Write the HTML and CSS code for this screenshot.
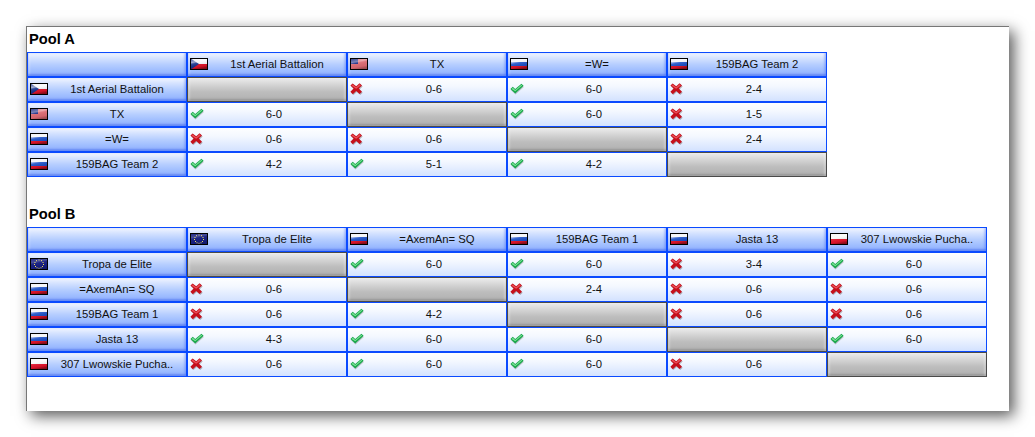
FILE: index.html
```html
<!DOCTYPE html>
<html lang="en">
<head>
<meta charset="utf-8">
<title>Pools</title>
<link rel="stylesheet" href="styles.css">
</head>
<body>
<svg class="defs" width="0" height="0" aria-hidden="true">
  <defs>
    <linearGradient id="gloss" x1="0" y1="0" x2="0.3" y2="1">
      <stop offset="0" stop-color="#fff" stop-opacity=".05"/>
      <stop offset=".38" stop-color="#fff" stop-opacity=".6"/>
      <stop offset=".5" stop-color="#fff" stop-opacity=".12"/>
      <stop offset=".8" stop-color="#000" stop-opacity=".05"/>
      <stop offset="1" stop-color="#000" stop-opacity=".4"/>
    </linearGradient>
    <symbol id="cz" viewBox="0 0 18 12">
      <rect width="18" height="6" fill="#f4f4f8"/><rect y="6" width="18" height="6" fill="#e0142a"/>
      <path d="M0 0 9 6 0 12z" fill="#14308c"/>
      <rect width="18" height="12" fill="url(#gloss)"/>
    </symbol>
    <symbol id="us" viewBox="0 0 18 12">
      <rect width="18" height="12" fill="#f0b8b8"/>
      <path d="M0 1h18M0 3h18M0 5h18M0 7h18M0 9h18M0 11h18" stroke="#c81c2c" stroke-width="1"/>
      <rect width="8" height="6" fill="#1c2c84"/>
      <rect width="18" height="12" fill="url(#gloss)" opacity=".7"/>
    </symbol>
    <symbol id="ru" viewBox="0 0 18 12">
      <rect width="18" height="4" fill="#eef0f6"/><rect y="4" width="18" height="4" fill="#1c50c8"/><rect y="8" width="18" height="4" fill="#e0142a"/>
      <rect width="18" height="12" fill="url(#gloss)"/>
    </symbol>
    <symbol id="pl" viewBox="0 0 18 12">
      <rect width="18" height="6" fill="#f6f6f6"/><rect y="6" width="18" height="6" fill="#e4142c"/>
      <rect width="18" height="12" fill="url(#gloss)"/>
    </symbol>
    <symbol id="eu" viewBox="0 0 18 12">
      <rect width="18" height="12" fill="#161e80"/>
      <g fill="#f6e25a">
        <rect x="8.5" y="1.5" width="1" height="1"/><rect x="11" y="2.2" width="1" height="1"/><rect x="12.5" y="4" width="1" height="1"/><rect x="13" y="6" width="1" height="1"/><rect x="12" y="8" width="1" height="1"/><rect x="10.5" y="9.3" width="1" height="1"/><rect x="8.5" y="9.8" width="1" height="1"/><rect x="6.5" y="9.3" width="1" height="1"/><rect x="5" y="8" width="1" height="1"/><rect x="4" y="6" width="1" height="1"/><rect x="4.5" y="4" width="1" height="1"/><rect x="6" y="2.2" width="1" height="1"/>
      </g>
      <rect width="18" height="12" fill="url(#gloss)" opacity=".35"/>
    </symbol>
    <symbol id="win" viewBox="0 0 14 12">
      <path d="M.6 6.2 3 4 5.2 6.2 11.4.9 13.6 3 5.2 10.6z" fill="#000" opacity=".2" transform="translate(.3 .9)"/>
      <path d="M.4 6 2.8 3.8 5.2 6 11.4.7 13.6 2.8 5.2 10.4z" fill="#18a84a"/>
      <path d="M1.6 5.9 2.8 4.8 5.2 7 11.4 1.7 12.2 2.5 5.2 8.2z" fill="#7fe29a"/>
    </symbol>
    <symbol id="loss" viewBox="0 0 14 12">
      <path d="M2.6 .6 6.2 3.4 9.6.4 12 2.8 8.8 5.8 12 9 9.6 11.2 6.2 8.2 2.8 11.4.4 9 3.6 5.8.4 2.8z" fill="#000" opacity=".25" transform="translate(.7 .7)"/>
      <path d="M2.6.4 6.2 3.2 9.6.2 12 2.6 8.8 5.6 12 8.8 9.6 11 6.2 8 2.8 11.2.4 8.8 3.6 5.6.4 2.6z" fill="#c5101c"/>
      <path d="M2.6 1.4 6.2 4.2 9.6 1.2 10.8 2.6 6.2 5.8 1.6 2.8z" fill="#ec5058"/>
    </symbol>
  </defs>
</svg>
<main class="window">
  <h2 class="pool-title">Pool A</h2>
  <div class="grid grid-4">
    <div class="cell head"></div>
    <div class="cell head"><svg class="flag"><use href="#cz"/></svg><span class="label">1st Aerial Battalion</span></div>
    <div class="cell head"><svg class="flag"><use href="#us"/></svg><span class="label">TX</span></div>
    <div class="cell head"><svg class="flag"><use href="#ru"/></svg><span class="label">=W=</span></div>
    <div class="cell head"><svg class="flag"><use href="#ru"/></svg><span class="label">159BAG Team 2</span></div>

    <div class="cell head"><svg class="flag"><use href="#cz"/></svg><span class="label">1st Aerial Battalion</span></div>
    <div class="cell self"></div>
    <div class="cell"><svg class="mark"><use href="#loss"/></svg><span class="score">0-6</span></div>
    <div class="cell"><svg class="mark"><use href="#win"/></svg><span class="score">6-0</span></div>
    <div class="cell"><svg class="mark"><use href="#loss"/></svg><span class="score">2-4</span></div>

    <div class="cell head"><svg class="flag"><use href="#us"/></svg><span class="label">TX</span></div>
    <div class="cell"><svg class="mark"><use href="#win"/></svg><span class="score">6-0</span></div>
    <div class="cell self"></div>
    <div class="cell"><svg class="mark"><use href="#win"/></svg><span class="score">6-0</span></div>
    <div class="cell"><svg class="mark"><use href="#loss"/></svg><span class="score">1-5</span></div>

    <div class="cell head"><svg class="flag"><use href="#ru"/></svg><span class="label">=W=</span></div>
    <div class="cell"><svg class="mark"><use href="#loss"/></svg><span class="score">0-6</span></div>
    <div class="cell"><svg class="mark"><use href="#loss"/></svg><span class="score">0-6</span></div>
    <div class="cell self"></div>
    <div class="cell"><svg class="mark"><use href="#loss"/></svg><span class="score">2-4</span></div>

    <div class="cell head"><svg class="flag"><use href="#ru"/></svg><span class="label">159BAG Team 2</span></div>
    <div class="cell"><svg class="mark"><use href="#win"/></svg><span class="score">4-2</span></div>
    <div class="cell"><svg class="mark"><use href="#win"/></svg><span class="score">5-1</span></div>
    <div class="cell"><svg class="mark"><use href="#win"/></svg><span class="score">4-2</span></div>
    <div class="cell self"></div>
  </div>

  <h2 class="pool-title pool-second">Pool B</h2>
  <div class="grid grid-5">
    <div class="cell head"></div>
    <div class="cell head"><svg class="flag"><use href="#eu"/></svg><span class="label">Tropa de Elite</span></div>
    <div class="cell head"><svg class="flag"><use href="#ru"/></svg><span class="label">=AxemAn= SQ</span></div>
    <div class="cell head"><svg class="flag"><use href="#ru"/></svg><span class="label">159BAG Team 1</span></div>
    <div class="cell head"><svg class="flag"><use href="#ru"/></svg><span class="label">Jasta 13</span></div>
    <div class="cell head"><svg class="flag"><use href="#pl"/></svg><span class="label">307 Lwowskie Pucha..</span></div>

    <div class="cell head"><svg class="flag"><use href="#eu"/></svg><span class="label">Tropa de Elite</span></div>
    <div class="cell self"></div>
    <div class="cell"><svg class="mark"><use href="#win"/></svg><span class="score">6-0</span></div>
    <div class="cell"><svg class="mark"><use href="#win"/></svg><span class="score">6-0</span></div>
    <div class="cell"><svg class="mark"><use href="#loss"/></svg><span class="score">3-4</span></div>
    <div class="cell"><svg class="mark"><use href="#win"/></svg><span class="score">6-0</span></div>

    <div class="cell head"><svg class="flag"><use href="#ru"/></svg><span class="label">=AxemAn= SQ</span></div>
    <div class="cell"><svg class="mark"><use href="#loss"/></svg><span class="score">0-6</span></div>
    <div class="cell self"></div>
    <div class="cell"><svg class="mark"><use href="#loss"/></svg><span class="score">2-4</span></div>
    <div class="cell"><svg class="mark"><use href="#loss"/></svg><span class="score">0-6</span></div>
    <div class="cell"><svg class="mark"><use href="#loss"/></svg><span class="score">0-6</span></div>

    <div class="cell head"><svg class="flag"><use href="#ru"/></svg><span class="label">159BAG Team 1</span></div>
    <div class="cell"><svg class="mark"><use href="#loss"/></svg><span class="score">0-6</span></div>
    <div class="cell"><svg class="mark"><use href="#win"/></svg><span class="score">4-2</span></div>
    <div class="cell self"></div>
    <div class="cell"><svg class="mark"><use href="#loss"/></svg><span class="score">0-6</span></div>
    <div class="cell"><svg class="mark"><use href="#loss"/></svg><span class="score">0-6</span></div>

    <div class="cell head"><svg class="flag"><use href="#ru"/></svg><span class="label">Jasta 13</span></div>
    <div class="cell"><svg class="mark"><use href="#win"/></svg><span class="score">4-3</span></div>
    <div class="cell"><svg class="mark"><use href="#win"/></svg><span class="score">6-0</span></div>
    <div class="cell"><svg class="mark"><use href="#win"/></svg><span class="score">6-0</span></div>
    <div class="cell self"></div>
    <div class="cell"><svg class="mark"><use href="#win"/></svg><span class="score">6-0</span></div>

    <div class="cell head"><svg class="flag"><use href="#pl"/></svg><span class="label">307 Lwowskie Pucha..</span></div>
    <div class="cell"><svg class="mark"><use href="#loss"/></svg><span class="score">0-6</span></div>
    <div class="cell"><svg class="mark"><use href="#win"/></svg><span class="score">6-0</span></div>
    <div class="cell"><svg class="mark"><use href="#win"/></svg><span class="score">6-0</span></div>
    <div class="cell"><svg class="mark"><use href="#loss"/></svg><span class="score">0-6</span></div>
    <div class="cell self"></div>
  </div>
</main>
</body>
</html>
```
FILE: styles.css
```css
* { box-sizing: border-box; }
html, body { margin: 0; padding: 0; background: #fff; }
body {
  width: 1035px;
  height: 437px;
  padding: 26px;
  overflow: hidden;
  font-family: "Liberation Sans", Arial, sans-serif;
  color: #111;
}
.defs { position: absolute; }
.window {
  width: 983px;
  height: 385px;
  background: #fff;
  border-left: 1px solid #777;
  border-top: 1px solid #777;
  box-shadow: 5px 5px 14px rgba(0, 0, 0, .65);
}
.pool-title {
  margin: 0;
  height: 25px;
  padding: 4px 0 0 2px;
  font-size: 14.67px;
  line-height: 17px;
  font-weight: bold;
  color: #000;
}
.pool-second { margin-top: 25px; }
.grid { display: grid; grid-auto-rows: 25px; }
.grid-4 { grid-template-columns: repeat(5, 160px); width: 800px; }
.grid-5 { grid-template-columns: repeat(6, 160px); width: 960px; }
.cell {
  display: flex;
  align-items: center;
  height: 25px;
  padding: 0 0 1px 2px;
  border: 1px solid #0a4aff;
  background: linear-gradient(#fdfeff 0, #f4f8ff 35%, #d3e2ff 100%);
  font-size: 11.3px;
}
.head {
  background: linear-gradient(#f2f6ff 0, #d6e3ff 22%, #b6ceff 50%, #9dbcff 78%, #8fb0ff 100%);
  box-shadow: inset 0 -2px 2px rgba(50, 90, 230, .45), inset -2px 0 2px rgba(70, 110, 240, .25), inset 2px 0 2px rgba(255, 255, 255, .25);
}
.self {
  border-color: #4a4a4a;
  background: linear-gradient(#ececec 0, #d4d4d4 30%, #bdbdbd 60%, #b0b0b0 100%);
  box-shadow: inset 0 -2px 2px rgba(0, 0, 0, .16), inset -2px 0 2px rgba(255, 255, 255, .3), inset 2px 0 2px rgba(255, 255, 255, .3);
}
.flag {
  flex: none;
  width: 18px;
  height: 12px;
  outline: 1px solid #000;
  outline-offset: -1px;
}
.mark { flex: none; width: 14px; height: 12px; }
.label { flex: 1; text-align: center; white-space: nowrap; }
.score { flex: 1; text-align: center; padding-right: 2px; }
```
